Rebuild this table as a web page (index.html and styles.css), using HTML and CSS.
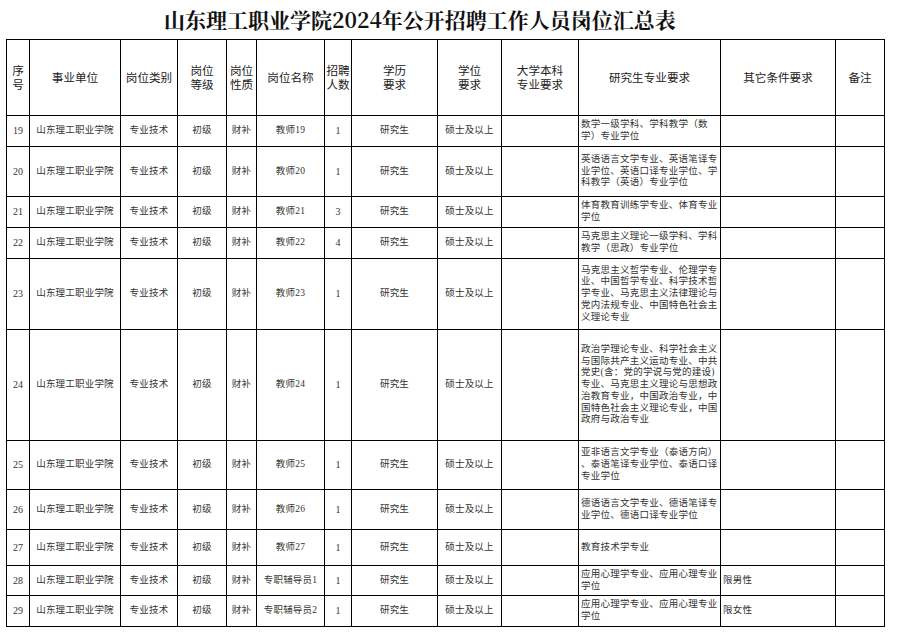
FILE: index.html
```html
<!DOCTYPE html>
<html lang="zh-CN">
<head>
<meta charset="utf-8">
<title>山东理工职业学院2024年公开招聘工作人员岗位汇总表</title>
<link rel="stylesheet" href="styles.css">
</head>
<body>
<div class="page">
  <h1 class="title">山东理工职业学院2024年公开招聘工作人员岗位汇总表</h1>
  <table class="sheet">
    <colgroup>
      <col class="c-no"><col class="c-unit"><col class="c-type"><col class="c-level"><col class="c-nature"><col class="c-name"><col class="c-num"><col class="c-edu"><col class="c-degree"><col class="c-bach"><col class="c-grad"><col class="c-other"><col class="c-note">
    </colgroup>
    <thead>
      <tr class="r-head">
        <th><span class="hl">序</span><span class="hl">号</span></th>
        <th>事业单位</th>
        <th>岗位类别</th>
        <th><span class="hl">岗位</span><span class="hl">等级</span></th>
        <th><span class="hl">岗位</span><span class="hl">性质</span></th>
        <th>岗位名称</th>
        <th><span class="hl">招聘</span><span class="hl">人数</span></th>
        <th><span class="hl">学历</span><span class="hl">要求</span></th>
        <th><span class="hl">学位</span><span class="hl">要求</span></th>
        <th><span class="hl">大学本科</span><span class="hl">专业要求</span></th>
        <th>研究生专业要求</th>
        <th>其它条件要求</th>
        <th>备注</th>
      </tr>
    </thead>
    <tbody>
      <tr class="r-31">
        <td class="num">19</td><td>山东理工职业学院</td><td>专业技术</td><td>初级</td><td>财补</td><td>教师19</td><td class="num">1</td><td>研究生</td><td>硕士及以上</td><td></td>
        <td class="left">数学一级学科、学科教学（数<br>学）专业学位</td><td class="left"></td><td></td>
      </tr>
      <tr class="r-50">
        <td class="num">20</td><td>山东理工职业学院</td><td>专业技术</td><td>初级</td><td>财补</td><td>教师20</td><td class="num">1</td><td>研究生</td><td>硕士及以上</td><td></td>
        <td class="left">英语语言文学专业、英语笔译专<br>业学位、英语口译专业学位、学<br>科教学（英语）专业学位</td><td class="left"></td><td></td>
      </tr>
      <tr class="r-31">
        <td class="num">21</td><td>山东理工职业学院</td><td>专业技术</td><td>初级</td><td>财补</td><td>教师21</td><td class="num">3</td><td>研究生</td><td>硕士及以上</td><td></td>
        <td class="left">体育教育训练学专业、体育专业<br>学位</td><td class="left"></td><td></td>
      </tr>
      <tr class="r-31">
        <td class="num">22</td><td>山东理工职业学院</td><td>专业技术</td><td>初级</td><td>财补</td><td>教师22</td><td class="num">4</td><td>研究生</td><td>硕士及以上</td><td></td>
        <td class="left">马克思主义理论一级学科、学科<br>教学（思政）专业学位</td><td class="left"></td><td></td>
      </tr>
      <tr class="r-71">
        <td class="num">23</td><td>山东理工职业学院</td><td>专业技术</td><td>初级</td><td>财补</td><td>教师23</td><td class="num">1</td><td>研究生</td><td>硕士及以上</td><td></td>
        <td class="left">马克思主义哲学专业、伦理学专<br>业、中国哲学专业、科学技术哲<br>学专业、马克思主义法律理论与<br>党内法规专业、中国特色社会主<br>义理论专业</td><td class="left"></td><td></td>
      </tr>
      <tr class="r-111">
        <td class="num">24</td><td>山东理工职业学院</td><td>专业技术</td><td>初级</td><td>财补</td><td>教师24</td><td class="num">1</td><td>研究生</td><td>硕士及以上</td><td></td>
        <td class="left">政治学理论专业、科学社会主义<br>与国际共产主义运动专业、中共<br>党史(含：党的学说与党的建设)<br>专业、马克思主义理论与思想政<br>治教育专业，中国政治专业，中<br>国特色社会主义理论专业，中国<br>政府与政治专业</td><td class="left"></td><td></td>
      </tr>
      <tr class="r-49">
        <td class="num">25</td><td>山东理工职业学院</td><td>专业技术</td><td>初级</td><td>财补</td><td>教师25</td><td class="num">1</td><td>研究生</td><td>硕士及以上</td><td></td>
        <td class="left">亚非语言文学专业（泰语方向）<br>、泰语笔译专业学位、泰语口译<br>专业学位</td><td class="left"></td><td></td>
      </tr>
      <tr class="r-40">
        <td class="num">26</td><td>山东理工职业学院</td><td>专业技术</td><td>初级</td><td>财补</td><td>教师26</td><td class="num">1</td><td>研究生</td><td>硕士及以上</td><td></td>
        <td class="left">德语语言文学专业、德语笔译专<br>业学位、德语口译专业学位</td><td class="left"></td><td></td>
      </tr>
      <tr class="r-36">
        <td class="num">27</td><td>山东理工职业学院</td><td>专业技术</td><td>初级</td><td>财补</td><td>教师27</td><td class="num">1</td><td>研究生</td><td>硕士及以上</td><td></td>
        <td class="left">教育技术学专业</td><td class="left"></td><td></td>
      </tr>
      <tr class="r-30">
        <td class="num">28</td><td>山东理工职业学院</td><td>专业技术</td><td>初级</td><td>财补</td><td>专职辅导员1</td><td class="num">1</td><td>研究生</td><td>硕士及以上</td><td></td>
        <td class="left">应用心理学专业、应用心理专业<br>学位</td><td class="left">限男性</td><td></td>
      </tr>
      <tr class="r-31">
        <td class="num">29</td><td>山东理工职业学院</td><td>专业技术</td><td>初级</td><td>财补</td><td>专职辅导员2</td><td class="num">1</td><td>研究生</td><td>硕士及以上</td><td></td>
        <td class="left">应用心理学专业、应用心理专业<br>学位</td><td class="left">限女性</td><td></td>
      </tr>
    </tbody>
  </table>
</div>
</body>
</html>
```

FILE: styles.css
```css
html, body {
  margin: 0;
  padding: 0;
  background: #ffffff;
}

.page {
  padding: 0 0 0 6px;
  font-family: "Liberation Serif", "Noto Sans CJK SC", serif;
  color: #333;
}

.title {
  margin: 0;
  height: 39px;
  line-height: 39px;
  padding-left: 158px;
  font-family: "Noto Serif CJK SC", "Noto Sans CJK SC", serif;
  font-size: 21px;
  font-weight: 700;
  color: #111;
  white-space: nowrap;
}

.sheet {
  border-collapse: collapse;
  table-layout: fixed;
  width: 878px;
}

.sheet th,
.sheet td {
  border: 1px solid #000;
  padding: 0 2px;
  text-align: center;
  vertical-align: middle;
  white-space: nowrap;
  overflow: hidden;
}

.sheet th {
  font-family: "Noto Sans CJK SC", sans-serif;
  font-weight: 400;
  font-size: 11.6px;
  line-height: 13.3px;
  color: #222;
  padding: 0;
}

.hl {
  display: block;
  height: 13.3px;
  line-height: 13.3px;
}

.sheet td {
  font-family: "Liberation Serif", "Noto Sans CJK SC", serif;
  font-size: 9.5px;
  line-height: 11.8px;
  letter-spacing: 0.2px;
  color: #333;
}

.sheet td.num {
  font-size: 10px;
  letter-spacing: 0;
}

.sheet td.left {
  text-align: left;
  padding-left: 2px;
  letter-spacing: 0.25px;
}

.c-no { width: 23px; }
.c-unit { width: 91px; }
.c-type { width: 57px; }
.c-level { width: 49px; }
.c-nature { width: 30px; }
.c-name { width: 68px; }
.c-num { width: 27px; }
.c-edu { width: 86px; }
.c-degree { width: 64px; }
.c-bach { width: 77px; }
.c-grad { width: 142px; }
.c-other { width: 115px; }
.c-note { width: 49px; }

.r-head { height: 76px; }
.r-30 { height: 30px; }
.r-31 { height: 31px; }
.r-36 { height: 36px; }
.r-40 { height: 40px; }
.r-49 { height: 49px; }
.r-50 { height: 50px; }
.r-71 { height: 71px; }
.r-111 { height: 111px; }
```
